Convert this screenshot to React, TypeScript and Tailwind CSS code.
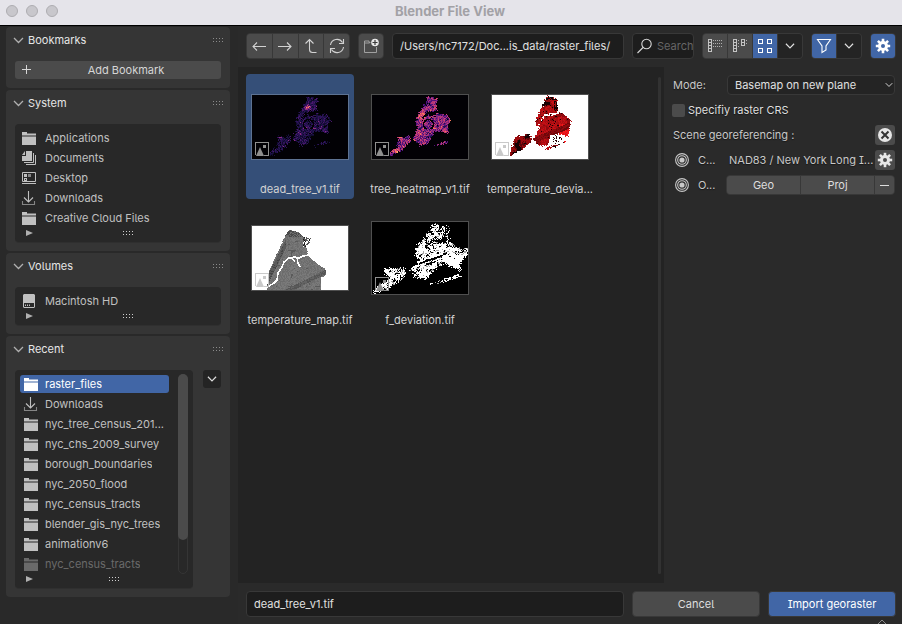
import React from "react";

type Pt = [number, number];
type Tone = (x: number, y: number, n: number, m: number) => string | null;

/* ---------- raster previews ---------- */

function hash(x: number, y: number, s: number) {
  let h = (x * 374761393 + y * 668265263 + s * 974634777) | 0;
  h = Math.imul(h ^ (h >>> 13), 1274126177);
  h = Math.imul(h ^ (h >>> 16), 2246822519);
  return ((h ^ (h >>> 15)) >>> 0) / 4294967296;
}

function smooth(x: number, y: number, size: number, s: number) {
  const gx = Math.floor(x / size);
  const gy = Math.floor(y / size);
  const fx = x / size - gx;
  const fy = y / size - gy;
  const a = hash(gx, gy, s) * (1 - fx) + hash(gx + 1, gy, s) * fx;
  const b = hash(gx, gy + 1, s) * (1 - fx) + hash(gx + 1, gy + 1, s) * fx;
  return a * (1 - fy) + b * fy;
}

function inside(x: number, y: number, poly: Pt[]) {
  let hit = false;
  for (let i = 0, j = poly.length - 1; i < poly.length; j = i++) {
    const [xi, yi] = poly[i];
    const [xj, yj] = poly[j];
    if (yi > y !== yj > y && x < ((xj - xi) * (y - yi)) / (yj - yi) + xi) hit = !hit;
  }
  return hit;
}

function rasterize(width: number, height: number, shapes: Pt[][], tone: Tone, rough: number) {
  const runs: Record<string, string> = {};
  for (let y = 0; y < height; y++) {
    for (let x = 0; x < width; x++) {
      const jx = x + 0.5 + (hash(x, y, 5) - 0.5) * rough;
      const jy = y + 0.5 + (hash(x, y, 6) - 0.5) * rough;
      if (!shapes.some((p) => inside(jx, jy, p))) continue;
      const color = tone(x, y, hash(x, y, 1), smooth(x, y, 3, 2));
      if (color) runs[color] = (runs[color] || "") + `M${x} ${y}h1v1h-1z`;
    }
  }
  return Object.entries(runs);
}

const treeShapes: Pt[][] = [
  [[56, 1], [60, 3], [66, 4], [64, 10], [65, 15], [60, 17], [55, 16], [53, 8]],
  [[54, 6], [57, 13], [52, 20], [49, 27], [46, 32], [44, 29], [45, 22], [49, 15]],
  [[51, 23], [56, 20], [61, 22], [65, 18], [75, 20], [79, 26], [76, 30], [76, 39], [70, 36], [62, 37], [60, 43], [56, 49], [48, 51], [41, 44], [44, 36], [47, 30]],
  [[26, 41], [31, 43], [38, 40], [38, 47], [30, 55], [18, 62], [19, 57], [25, 52]],
  [[61, 51], [70, 48], [75, 46], [77, 48], [62, 52]],
];
const redShapes: Pt[][] = [
  [[55, 1], [60, 2], [65, 4], [66, 19], [58, 19], [51, 22], [45, 33], [44, 24], [49, 14]],
  [[47, 31], [50, 24], [57, 18], [70, 17], [75, 23], [79, 26], [76, 42], [66, 39], [57, 42], [56, 50], [47, 51], [41, 44], [46, 37]],
  [[24, 41], [39, 40], [39, 47], [31, 54], [18, 61], [20, 52]],
  [[53, 53], [62, 50], [74, 46], [75, 47], [64, 52], [53, 55]],
  [[58, 44], [66, 40], [72, 44], [64, 49]],
];
const greyShapes: Pt[][] = [
  [[36, 4], [47, 6], [51, 11], [59, 12], [57, 20], [53, 17], [57, 30], [64, 36], [74, 44], [74, 49], [69, 52], [69, 64], [15, 64], [17, 45]],
];
const bwShapes: Pt[][] = [
  [[61, 2], [76, 4], [78, 18], [66, 17], [55, 22], [47, 37], [43, 34], [44, 26], [52, 15]],
  [[51, 28], [60, 21], [78, 20], [87, 26], [97, 27], [97, 31], [89, 38], [89, 49], [79, 45], [72, 40], [60, 50], [53, 58], [42, 56], [38, 48], [46, 40]],
  [[11, 47], [33, 46], [33, 55], [15, 67], [1, 72], [3, 66], [16, 58]],
  [[55, 63], [70, 58], [87, 53], [89, 55], [70, 60], [57, 63]],
];

const darkTone: Tone = (x, y, n, m) => {
  if (y > 23 && y < 34 && Math.abs(Math.hypot(x - 56, y - 29) - 5) < 0.8) return null;
  const hot = Math.exp(-((x - 55) ** 2 + (y - 11) ** 2) / 18) * 0.45 + Math.exp(-((x - 54) ** 2 / 12 + (y - 32) ** 2 / 2)) * 0.45;
  const v = n * 0.45 + m * 0.35 + hot;
  if (v < 0.2) return null;
  if (v < 0.33) return "#100b2d";
  if (v < 0.47) return "#1b1044";
  if (v < 0.6) return "#2f1358";
  if (v < 0.7) return "#4a176c";
  if (v < 0.85) return "#8c2981";
  if (v < 1) return "#d3436e";
  return "#fc8961";
};
const heatTone: Tone = (x, y, n, m) => {
  if (y > 23 && y < 34 && Math.abs(Math.hypot(x - 56, y - 29) - 5) < 0.8) return null;
  const hot = Math.exp(-((x - 24) ** 2 + (y - 56) ** 2) / 14) * 0.35 + Math.exp(-((x - 50) ** 2 + (y - 19) ** 2) / 20) * 0.25 + (x > 76 ? 0.25 : 0);
  const v = n * 0.45 + m * 0.4 + hot;
  if (v < 0.14) return null;
  if (v < 0.25) return "#221150";
  if (v < 0.38) return "#51127c";
  if (v < 0.5) return "#822681";
  if (v < 0.62) return "#b5367a";
  if (v < 0.74) return "#d8456c";
  if (v < 0.9) return "#f8765c";
  return "#feb078";
};
const redTone: Tone = (x, y, n, m) => {
  if (x > 57 && y > 39 && y < 50 && x < 72) return n > 0.72 ? "#2a0304" : null;
  const river = y - (20 - (x - 50) * 0.12);
  if (x > 51 && x < 68 && Math.abs(river) < 1.2 && n > 0.3) return null;
  if (x < 40) return m + n * 0.5 > 0.8 ? "#9b0a0d" : m > 0.4 ? "#5b0508" : "#140103";
  if (y < 5 && n > 0.3) return "#120102";
  if (x > 61 && y < 16 && n > 0.5) return "#120102";
  const band = Math.abs(y - (44 - (x - 44) * 0.42));
  if (band < 3) return n > 0.55 ? "#6f070a" : "#8d0a0e";
  if (m < 0.2 || n < 0.04) return "#180103";
  if (x > 66 && y > 28) return n > 0.4 ? "#f2161b" : "#d61116";
  if (m < 0.45) return "#8f0a0e";
  return n > 0.55 ? "#c51015" : "#a80d12";
};
const greyTone: Tone = (x, y, n, m) => {
  if (x > 50 && y < 21) return n > 0.5 ? "#555555" : n > 0.35 ? "#161616" : null;
  if (y < 11 && n > 0.4) return "#4b4b4b";
  if (m < 0.15) return "#5a5a5a";
  if (Math.abs(y - (64 - (x - 36) * 0.5)) < 2.2) return n > 0.5 ? "#555555" : "#646464";
  if (x < 34 && Math.abs(y - (50 - (x - 17) * 2)) < 5) return n > 0.7 ? "#444444" : "#5c5c5c";
  return n > 0.66 ? "#7a7a7a" : n > 0.33 ? "#737373" : "#6c6c6c";
};
const bwTone: Tone = (x, y, n, m) => {
  if (x > 70 && y > 32) return n > 0.03 ? "#ffffff" : null;
  const gap = Math.abs(y - (40 - (x - 50) * 0.35));
  if (x > 46 && x < 74 && gap < 1) return null;
  const limit = y < 22 && x > 40 ? 0.54 : x < 36 ? 0.42 : 0.43;
  const v = n * 0.45 + m * 0.55;
  if (v < limit - 0.08) return null;
  return v < limit ? "#a5a5a5" : "#ffffff";
};

interface Preview {
  name: string;
  label: string;
  height: number;
  bg: string;
  shapes: Pt[][];
  tone: Tone;
  rough: number;
  rivers?: boolean;
  light?: boolean;
}

const files: Preview[] = [
  { name: "dead_tree_v1.tif", label: "dead_tree_v1.tif", height: 64, bg: "#020105", shapes: treeShapes, tone: darkTone, rough: 3 },
  { name: "tree_heatmap_v1.tif", label: "tree_heatmap_v1.tif", height: 64, bg: "#020105", shapes: treeShapes, tone: heatTone, rough: 2 },
  { name: "temperature_deviation", label: "temperature_devia...", height: 64, bg: "#ffffff", shapes: redShapes, tone: redTone, rough: 2, light: true },
  { name: "temperature_map.tif", label: "temperature_map.tif", height: 64, bg: "#ffffff", shapes: greyShapes, tone: greyTone, rough: 1, rivers: true, light: true },
  { name: "f_deviation.tif", label: "f_deviation.tif", height: 72, bg: "#000000", shapes: bwShapes, tone: bwTone, rough: 3 },
];

function Thumbnail({ file }: { file: Preview }) {
  const runs = rasterize(96, file.height, file.shapes, file.tone, file.rough);
  const b = file.height - 17;
  const mark = file.light ? "#c9c9c9" : "#8f8f8f";
  return (
    <svg width={98} height={file.height + 2} viewBox={`-1 -1 98 ${file.height + 2}`} shapeRendering="crispEdges" aria-hidden="true">
      <rect x={-1} y={-1} width={98} height={file.height + 2} fill="#ffffff" fillOpacity={0.2} />
      <rect width={96} height={file.height} fill={file.bg} />
      {runs.map(([color, d]) => (
        <path key={color} d={d} fill={color} />
      ))}
      {file.rivers && (
        <g fill="none" stroke="#ffffff">
          <path d="M17 60l5-3 3-3 1-7 4-6 2-5 5-4 6-1 4 1 4-2 6-1 5 5 5 4" strokeWidth={1.6} />
          <path d="M45 32l1 5 2 4M39 31l4 5" strokeWidth={1.4} />
        </g>
      )}
      <g transform={`translate(3 ${b})`}>
        <path d="M0.5 13V0.5H13.5V13.5H9" fill="none" stroke={mark} />
        <path d="M1 14l4-9 4 9z" fill={mark} shapeRendering="auto" />
        <rect x={8} y={3} width={3} height={3} fill={mark} />
      </g>
    </svg>
  );
}

/* ---------- icons ---------- */

const svgBase = { fill: "none", stroke: "currentColor", "aria-hidden": true } as const;

const Chevron = ({ size = 11 }: { size?: number }) => (
  <svg {...svgBase} width={size} height={size} viewBox="0 0 11 11" strokeWidth={1.3}>
    <path d="M1 3l4.500 4.500L10 3" />
  </svg>
);
const FolderIcon = () => (
  <svg width="16" height="16" viewBox="0 0 16 16" fill="currentColor" aria-hidden="true">
    <path d="M1 2h5v1.500h9v2H1zM1 6.500h14V15H1z" />
  </svg>
);
const DocsIcon = () => (
  <svg width="16" height="16" viewBox="0 0 16 16" aria-hidden="true">
    <path d="M5 1h6v10H1V6h4z" fill="currentColor" />
    <path d="M1 5l3-4v4z" fill="currentColor" />
    <path d="M12.500 3v9.500H3M14.500 5v9.500H5" fill="none" stroke="currentColor" />
  </svg>
);
const DesktopIcon = () => (
  <svg width="16" height="16" viewBox="0 0 16 16" aria-hidden="true">
    <path d="M1.500 2.500h13v9h-13z" fill="none" stroke="currentColor" />
    <path d="M1 13h14v1H1zM3 4h3v3H3zM3 8h3v3H3z" fill="currentColor" />
    <path d="M7 4h3v3H7z" fill="#858585" />
    <path d="M4 9h1v1H4z" fill="#282828" />
  </svg>
);
const DownloadIcon = () => (
  <svg {...svgBase} width="16" height="16" viewBox="0 0 16 16" strokeWidth={1.1}>
    <path d="M7.500 1v10.500M3 7.500l4.500 4.500L12 7.500" />
    <path d="M1.500 11v3.500h12V11" stroke="#858585" />
  </svg>
);
const DiskIcon = () => (
  <svg width="16" height="16" viewBox="0 0 16 16" aria-hidden="true">
    <path d="M3 1h10l1 1v12l-1 1H3l-1-1V2z" fill="currentColor" />
    <path d="M3 10h10v4H3z" fill="#282828" />
    <path d="M4 11.500h1v1.500H4zM6 11.500h1v1.500H6zM8 11.500h1v1.500H8z" fill="currentColor" />
  </svg>
);
const Grip = ({ color = "#d0d0d0" }: { color?: string }) => (
  <svg width="11" height="5" viewBox="0 0 11 5" fill={color} shapeRendering="crispEdges" aria-hidden="true">
    <path d="M0 0h1v1H0zM3 0h1v1H3zM6 0h1v1H6zM9 0h1v1H9zM0 3h1v1H0zM3 3h1v1H3zM6 3h1v1H6zM9 3h1v1H9z" />
  </svg>
);
const GearIcon = ({ hole }: { hole: string }) => (
  <svg width="16" height="16" viewBox="-8 -8 16 16" fill="currentColor" aria-hidden="true">
    <circle r="5" />
    {[0, 45, 90, 135].map((a) => (
      <path key={a} d="M-1.300 -7.200h2.600v14.400h-2.600z" transform={`rotate(${a})`} />
    ))}
    <circle r="2" fill={hole} />
  </svg>
);
const TargetIcon = () => (
  <svg {...svgBase} width="16" height="16" viewBox="0 0 16 16">
    <circle cx="8" cy="8" r="6.400" strokeWidth={1.1} />
    <circle cx="8" cy="8" r="4.300" strokeWidth={1.1} />
    <circle cx="8" cy="8" r="2.600" fill="currentColor" stroke="none" />
  </svg>
);

/* ---------- sidebar ---------- */

const icons = { folder: FolderIcon, docs: DocsIcon, desktop: DesktopIcon, download: DownloadIcon, disk: DiskIcon };
type Entry = { icon: keyof typeof icons; label: string; state?: "active" | "faded" };

const systemItems: Entry[] = [
  { icon: "folder", label: "Applications" },
  { icon: "docs", label: "Documents" },
  { icon: "desktop", label: "Desktop" },
  { icon: "download", label: "Downloads" },
  { icon: "folder", label: "Creative Cloud Files" },
];
const volumeItems: Entry[] = [{ icon: "disk", label: "Macintosh HD" }];
const recentItems: Entry[] = [
  { icon: "folder", label: "raster_files", state: "active" },
  { icon: "download", label: "Downloads" },
  { icon: "folder", label: "nyc_tree_census_201..." },
  { icon: "folder", label: "nyc_chs_2009_survey" },
  { icon: "folder", label: "borough_boundaries" },
  { icon: "folder", label: "nyc_2050_flood" },
  { icon: "folder", label: "nyc_census_tracts" },
  { icon: "folder", label: "blender_gis_nyc_trees" },
  { icon: "folder", label: "animationv6" },
  { icon: "folder", label: "nyc_census_tracts", state: "faded" },
];

function Panel({ title, children }: { title: string; children: React.ReactNode }) {
  return (
    <section className="rounded bg-[#353535] px-[9px] pb-[9px]">
      <h2>
        <button type="button" className="mb-2 flex h-[26px] w-full items-center text-left text-[#e6e6e6]">
          <span className="-ml-0.5 mr-1 text-[#b0b0b0]"><Chevron /></span>
          <span className="flex-1">{title}</span>
          <span className="-mr-[3px]"><Grip color="#8b8b8b" /></span>
        </button>
      </h2>
      {children}
    </section>
  );
}

function PlaceList({ items, scroll }: { items: Entry[]; scroll?: boolean }) {
  return (
    <div className="min-w-0 flex-1 rounded bg-[#282828] px-[5px] pt-1 pb-1 shadow-[0_1px_0_#2f2f2f]">
      <div className="flex gap-[9px]">
        <ul className="min-w-0 flex-1">
          {items.map((item, i) => {
            const Icon = icons[item.icon];
            const tone =
              item.state === "active" ? "bg-[#4166a6] text-white" : item.state === "faded" ? "text-[#6a6a6a]" : "text-[#c0c0c0]";
            return (
              <li key={i} className="flex h-5 items-center">
                <button type="button" className={`flex h-[18px] w-full items-center rounded-[3px] text-left ${scroll ? "gap-1.5 pl-[3px]" : "gap-2 pl-px"} ${tone}`}>
                  <Icon />
                  <span className="truncate">{item.label}</span>
                </button>
              </li>
            );
          })}
        </ul>
        {scroll && (
          <div className="h-[200px] w-[10px] rounded-full border border-[#353535]">
            <div className="-mx-px -mt-px h-[166px] rounded-full bg-[#4b4b4b]" />
          </div>
        )}
      </div>
      <div className="flex h-[10px] items-center gap-[7px] pl-1.5">
        <svg width="7" height="6" viewBox="0 0 7 6" fill="#b0b0b0" aria-hidden="true">
          <path d="M0 0l7 3-7 3z" />
        </svg>
        <span className="flex flex-1 justify-center"><Grip /></span>
      </div>
    </div>
  );
}

/* ---------- page ---------- */

const toolButton = "flex items-center justify-center bg-[#4b4b4b] text-[#d2d2d2]";
const group = "flex h-[26px] gap-px overflow-hidden rounded border border-[#383838] bg-[#383838]";

export default function App() {
  return (
    <div
      className="flex min-h-screen flex-col bg-[#2a2a2a] text-[11px] leading-4 text-[#c8c8c8]"
      style={{ fontFamily: 'Inter, "Liberation Sans", sans-serif', fontFeatureSettings: '"cv05", "cv08"' }}
    >
      <header className="grid h-[26px] grid-cols-[1fr_auto_1fr] items-center border-b border-black bg-[#e5e4ea] pr-2 pb-1 pl-1.5">
        <div className="flex gap-2">
          {["Close", "Minimize", "Zoom"].map((n) => (
            <button key={n} type="button" aria-label={n} className="size-3 rounded-full border border-[#aeadb1] bg-[#c8c7cc]" />
          ))}
        </div>
        <h1 className="text-[13px] font-bold text-[#a2a1a6]">Blender File View</h1>
      </header>

      <div className="flex flex-1 [text-shadow:0_1px_1px_rgba(0,0,0,0.5)]">
        <aside className="flex w-[238px] flex-col gap-0.5 bg-[#292929] pt-px pr-2 pl-1.5">
          <Panel title="Bookmarks">
            <button type="button" className="relative h-[18px] w-full rounded-[3px] bg-[#4b4b4b] pl-4 text-center text-[#d6d6d6]">
              <svg {...svgBase} className="absolute top-1 left-[7px]" width="9" height="9" viewBox="0 0 9 9">
                <path d="M4.500 0v9M0 4.500h9" />
              </svg>
              Add Bookmark
            </button>
          </Panel>
          <Panel title="System"><PlaceList items={systemItems} /></Panel>
          <Panel title="Volumes"><PlaceList items={volumeItems} /></Panel>
          <Panel title="Recent">
            <div className="flex items-start gap-[10px]">
              <PlaceList items={recentItems} scroll />
              <button type="button" aria-label="Recent options" className="flex size-[18px] items-center justify-center rounded-[3px] bg-[#242424] text-[#dddddd]">
                <Chevron size={10} />
              </button>
            </div>
          </Panel>
        </aside>

        <main className="flex min-w-0 flex-1 flex-col">
          <div className="flex h-[41px] items-center gap-2 pr-1.5 pb-px pl-2">
            <div className={`${group} w-[104px]`}>
              <button type="button" aria-label="Back" className={`${toolButton} flex-1`}>
                <svg {...svgBase} width="16" height="16" viewBox="0 0 16 16" strokeWidth={1.1}><path d="M15 8.500H2M6 4.500l-4 4 4 4" /></svg>
              </button>
              <button type="button" aria-label="Forward" className={`${toolButton} flex-1`}>
                <svg {...svgBase} width="16" height="16" viewBox="0 0 16 16" strokeWidth={1.1}><path d="M1 8.500h13M10 4.500l4 4-4 4" /></svg>
              </button>
              <button type="button" aria-label="Parent directory" className={`${toolButton} flex-1`}>
                <svg {...svgBase} width="16" height="16" viewBox="0 0 16 16" strokeWidth={1.1}><path d="M13.500 14.500h-4q-3 0-3-3V1.500M2.500 5.500l4-4 4 4" /></svg>
              </button>
              <button type="button" aria-label="Refresh" className={`${toolButton} flex-1`}>
                <svg {...svgBase} width="16" height="16" viewBox="0 0 16 16" strokeWidth={1.1}>
                  <path d="M1.500 7a6.500 6.500 0 0 1 12-2.500M14.500 1v4.500H10M14.500 9a6.500 6.500 0 0 1-12 2.500M1.500 15v-4.500H6" />
                </svg>
              </button>
            </div>
            <div className={`${group} w-[26px]`}>
              <button type="button" aria-label="New folder" className={`${toolButton} flex-1`}>
                <svg width="16" height="16" viewBox="0 0 16 16" aria-hidden="true">
                  <path d="M7.500 4.500H6V3H1.500v11.500h12V9M1.500 5h5" fill="none" stroke="#a0a0a0" />
                  <circle cx="12" cy="4.500" r="3.800" fill="#e6e6e6" />
                  <path d="M12 2v5M9.500 4.500h5" stroke="#3a3a3a" strokeWidth={1.2} />
                </svg>
              </button>
            </div>
            <input
              aria-label="Directory"
              defaultValue="/Users/nc7172/Doc...is_data/raster_files/"
              className="h-[26px] min-w-0 flex-1 rounded border border-[#383838] bg-[#1d1d1d] px-[7px] text-[#e0e0e0]"
            />
            <label className="flex h-[26px] w-[62px] items-center overflow-hidden rounded border border-[#383838] bg-[#1d1d1d] pl-1">
              <svg {...svgBase} className="shrink-0 text-[#d8d8d8]" width="16" height="16" viewBox="0 0 16 16" strokeWidth={1.1}>
                <circle cx="9.500" cy="6" r="4.700" />
                <path d="M6 9.500L0.500 15" />
              </svg>
              <input type="text" aria-label="Search" placeholder="Search" className="ml-1 w-10 shrink-0 placeholder:text-[#666666]" />
            </label>
            <div className={`${group} w-[101px]`}>
              <button type="button" aria-label="Vertical list" className={`${toolButton} w-6`}>
                <svg width="16" height="16" viewBox="0 0 16 16" shapeRendering="crispEdges" aria-hidden="true">
                  <path d="M1.500 1.500h3v12h-3zM1.500 4.500h3M1.500 7.500h3M1.500 10.500h3" fill="none" stroke="#c4c4c4" />
                  <path d="M6 2.500h10M6 5.500h10M6 8.500h10" stroke="#b0b0b0" strokeDasharray="1 1" />
                </svg>
              </button>
              <button type="button" aria-label="Horizontal list" className={`${toolButton} w-6`}>
                <svg width="16" height="16" viewBox="0 0 16 16" shapeRendering="crispEdges" aria-hidden="true">
                  <path d="M1.500 1.500h3v12h-3zM1.500 4.500h3M1.500 7.500h3M1.500 10.500h3M9.500 1.500h3v6h-3zM9.500 4.500h3" fill="none" stroke="#c4c4c4" />
                  <path d="M6 2.500h2M6 5.500h2M6 8.500h2M14 2.500h2M14 5.500h2" stroke="#b0b0b0" strokeDasharray="1 1" />
                </svg>
              </button>
              <button type="button" aria-label="Thumbnails" aria-pressed="true" className="flex w-6 items-center justify-center bg-[#4166a6] text-white">
                <svg {...svgBase} width="16" height="16" viewBox="0 0 16 16" shapeRendering="crispEdges">
                  <path d="M1.500 1.500h4v4h-4zM10.500 1.500h4v4h-4zM1.500 10.500h4v4h-4zM10.500 10.500h4v4h-4z" />
                </svg>
              </button>
              <button type="button" aria-label="Display settings" className="flex flex-1 items-center justify-center bg-[#242424] text-[#dddddd]">
                <Chevron size={10} />
              </button>
            </div>
            <div className={`${group} w-[51px]`}>
              <button type="button" aria-label="Filter" aria-pressed="true" className="flex w-6 items-center justify-center bg-[#4166a6] text-white">
                <svg {...svgBase} width="16" height="16" viewBox="0 0 16 16" strokeWidth={1.1}>
                  <path d="M1.500 1.500h13L10 8v4l-4 2.500V8z" />
                </svg>
              </button>
              <button type="button" aria-label="Filter settings" className="flex flex-1 items-center justify-center bg-[#242424] text-[#dddddd]">
                <Chevron size={10} />
              </button>
            </div>
            <div className={`${group} w-[26px]`}>
              <button type="button" aria-label="Toggle options" className="flex flex-1 items-center justify-center bg-[#4166a6] text-white">
                <GearIcon hole="#4166a6" />
              </button>
            </div>
          </div>

          <div className="flex flex-1">
            <div className="flex min-w-0 flex-1 bg-[#232323] pt-[7px] pr-[3px] pl-2">
              <ul className="flex flex-1 flex-wrap content-start gap-x-3 gap-y-1.5">
                {files.map((f, i) => (
                  <li key={f.name}>
                    <button
                      type="button"
                      className={`flex h-[125px] w-[108px] flex-col items-center rounded whitespace-nowrap text-[#d2d2d2] ${i === 0 ? "bg-[#354f78]" : ""}`}
                    >
                      <span className="flex h-[105px] items-center"><Thumbnail file={f} /></span>
                      <span className="flex h-5 items-center">{f.label}</span>
                    </button>
                  </li>
                ))}
              </ul>
              <div className="mt-[3px] mb-[9px] w-[3px] rounded-full bg-[#323232]" />
            </div>

            <form className="flex w-[238px] flex-col gap-[5px] pt-2 pr-[7px] pl-2">
              <div className="flex h-5 items-center">
                <label htmlFor="mode" className="w-[55px] pl-px">Mode:</label>
                <div className="relative flex-1">
                  <select id="mode" className="h-5 w-full appearance-none rounded border border-[#383838] bg-[#242424] pl-[7px] text-[#e0e0e0]">
                    <option>Basemap on new plane</option>
                  </select>
                  <span className="pointer-events-none absolute top-1.5 right-0.5 text-[#dddddd]"><Chevron size={8} /></span>
                </div>
              </div>
              <label className="flex h-5 items-center gap-[3px] text-[#dedede]">
                <input type="checkbox" className="size-[13px] appearance-none rounded-[2px] bg-[#4b4b4b]" />
                Specifiy raster CRS
              </label>
              <div className="flex h-5 items-center">
                <span className="flex-1 pl-px">Scene georeferencing :</span>
                <button type="button" aria-label="Clear georeferencing" className="flex size-5 items-center justify-center rounded-[3px] bg-[#4b4b4b]">
                  <svg width="16" height="16" viewBox="0 0 16 16" aria-hidden="true">
                    <circle cx="8" cy="8" r="7" fill="#e6e6e6" />
                    <path d="M4.500 4.500l7 7M11.500 4.500l-7 7" stroke="#333333" strokeWidth={2} />
                  </svg>
                </button>
              </div>
              <div className="flex h-5 items-center">
                <span className="w-[26px] pl-0.5"><TargetIcon /></span>
                <span className="w-[31px]">C...</span>
                <span className="flex-1 whitespace-nowrap">NAD83 / New York Long I...</span>
                <button type="button" aria-label="Projection settings" className="flex size-5 items-center justify-center rounded-[3px] bg-[#4b4b4b] text-[#e6e6e6]">
                  <GearIcon hole="#4b4b4b" />
                </button>
              </div>
              <div className="flex h-5 items-center">
                <span className="w-[26px] pl-0.5"><TargetIcon /></span>
                <span className="w-7">O...</span>
                <div className="flex h-5 flex-1 gap-px overflow-hidden rounded border border-[#383838] bg-[#383838] text-[#dedede]">
                  <button type="button" className="flex-1 bg-[#4b4b4b]">Geo</button>
                  <button type="button" className="flex-1 bg-[#4b4b4b]">Proj</button>
                  <button type="button" aria-label="Remove" className="flex w-[19px] items-center justify-center bg-[#4b4b4b]">
                    <span className="h-px w-[9px] bg-[#dedede]" />
                  </button>
                </div>
              </div>
            </form>
          </div>

          <footer className="flex h-[41px] gap-2 pt-2 pr-1.5 pl-2">
            <input
              aria-label="File name"
              defaultValue="dead_tree_v1.tif"
              className="h-[26px] min-w-0 flex-1 rounded border border-[#383838] bg-[#1d1d1d] px-[7px] text-[#e0e0e0]"
            />
            <button type="button" className="h-[26px] w-32 rounded border border-[#383838] bg-[#4b4b4b] text-[#dedede]">Cancel</button>
            <div className="relative">
              <button type="button" className="h-[26px] w-32 rounded border border-[#383838] bg-[#4166a6] text-white">Import georaster</button>
              <svg {...svgBase} className="absolute top-7 right-2 text-[#8a8a8a]" width="12" height="5" viewBox="0 0 12 5">
                <path d="M2 5l4-4 4 4" />
              </svg>
            </div>
          </footer>
        </main>
      </div>
    </div>
  );
}
